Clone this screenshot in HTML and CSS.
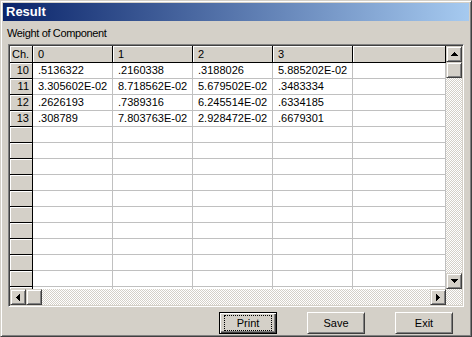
FILE: index.html
```html
<!DOCTYPE html>
<html lang="en">
<head>
    <meta charset="UTF-8">
    <title>Result</title>
    <link rel="stylesheet" href="styles.css">
</head>
<body>
    <div class="window">
        <div class="titlebar">Result</div>
        <div class="client">
            <div class="caption">Weight of Component</div>

            <!-- flex grid with its scrollbars -->
            <div class="gridframe">
                <div class="sheet">
                    <table class="grid">
                        <colgroup>
                            <col class="c-ch"><col class="c-data"><col class="c-data"><col class="c-data"><col class="c-data"><col class="c-last">
                        </colgroup>
                        <tr class="head">
                            <th>Ch.</th><th>0</th><th>1</th><th>2</th><th>3</th><th></th>
                        </tr>
                        <tr><th>10</th><td>.5136322</td><td>.2160338</td><td>.3188026</td><td>5.885202E-02</td><td></td></tr>
                        <tr><th>11</th><td>3.305602E-02</td><td>8.718562E-02</td><td>5.679502E-02</td><td>.3483334</td><td></td></tr>
                        <tr><th>12</th><td>.2626193</td><td>.7389316</td><td>6.245514E-02</td><td>.6334185</td><td></td></tr>
                        <tr><th>13</th><td>.308789</td><td>7.803763E-02</td><td>2.928472E-02</td><td>.6679301</td><td></td></tr>
                        <tr><th></th><td></td><td></td><td></td><td></td><td></td></tr>
                        <tr><th></th><td></td><td></td><td></td><td></td><td></td></tr>
                        <tr><th></th><td></td><td></td><td></td><td></td><td></td></tr>
                        <tr><th></th><td></td><td></td><td></td><td></td><td></td></tr>
                        <tr><th></th><td></td><td></td><td></td><td></td><td></td></tr>
                        <tr><th></th><td></td><td></td><td></td><td></td><td></td></tr>
                        <tr><th></th><td></td><td></td><td></td><td></td><td></td></tr>
                        <tr><th></th><td></td><td></td><td></td><td></td><td></td></tr>
                        <tr><th></th><td></td><td></td><td></td><td></td><td></td></tr>
                        <tr><th></th><td></td><td></td><td></td><td></td><td></td></tr>
                        <tr><th></th><td></td><td></td><td></td><td></td><td></td></tr>
                    </table>
                </div>

                <div class="vscroll">
                    <div class="sbtn"><svg width="7" height="4" viewBox="0 0 7 4"><path d="M3 0h1v1h1v1h1v1h1v1H0V3h1V2h1V1h1z"/></svg></div>
                    <div class="sbtn"></div>
                    <div class="track"></div>
                    <div class="sbtn"><svg width="7" height="4" viewBox="0 0 7 4"><path d="M0 0h7v1H6v1H5v1H4v1H3V3H2V2H1V1H0z"/></svg></div>
                </div>

                <div class="hscroll">
                    <div class="sbtn"><svg width="4" height="7" viewBox="0 0 4 7"><path d="M3 0h1v7H3V6H2V5H1V4H0V3h1V2h1V1h1z"/></svg></div>
                    <div class="sbtn"></div>
                    <div class="track"></div>
                    <div class="sbtn"><svg width="4" height="7" viewBox="0 0 4 7"><path d="M0 0h1v1h1v1h1v1h1v1H3v1H2v1H1v1H0z"/></svg></div>
                </div>

                <div class="corner"></div>
            </div>

            <div class="buttons">
                <button class="btn default"><span>Print</span></button>
                <button class="btn"><span>Save</span></button>
                <button class="btn"><span>Exit</span></button>
            </div>
        </div>
    </div>
</body>
</html>
```

FILE: styles.css
```css
body {
    margin: 0;
    font-family: "Liberation Sans", Arial, sans-serif;
    font-size: 11px;
    color: #000;
}
.window {
    width: 472px;
    height: 337px;
    box-sizing: border-box;
    background: #d4d0c8;
    border: 1px solid;
    border-color: #d4d0c8 #404040 #404040 #d4d0c8;
    box-shadow: inset 1px 1px #fff, inset -1px -1px #808080;
    padding: 2px;
    display: flex;
    flex-direction: column;
}
.titlebar {
    height: 18px;
    line-height: 18px;
    padding-left: 3px;
    background: linear-gradient(to right, #0a246a, #a6caf0);
    color: #fff;
    font-weight: bold;
    font-size: 13px;
}
.client {
    display: flex;
    flex-direction: column;
}
.caption {
    margin: 6px 0 4px 4px;
    line-height: 13px;
    letter-spacing: -0.35px;
}
.gridframe {
    margin-left: 5px;
    width: 456px;
    height: 263px;
    box-sizing: border-box;
    border: 1px solid;
    border-color: #808080 #fff #fff #808080;
    box-shadow: inset 1px 1px #404040, inset -1px -1px #d4d0c8;
    padding: 1px;
    display: grid;
    grid-template-columns: 436px 16px;
    grid-template-rows: 243px 16px;
}
.sheet {
    overflow: hidden;
    background: #fff;
}
.grid {
    table-layout: fixed;
    border-collapse: separate;
    border-spacing: 0;
    width: 436px;
}
.c-ch { width: 23px; }
.c-data { width: 80px; }
.c-last { width: 93px; }
.grid td, .grid th {
    height: 15px;
    padding: 0 0 0 5px;
    line-height: 15px;
    font-weight: normal;
    text-align: left;
    white-space: nowrap;
    overflow: hidden;
    border-right: 1px solid #c0c0c0;
    border-bottom: 1px solid #c0c0c0;
}
.grid th {
    background: #d4d0c8;
    border-color: #000;
    box-shadow: inset 1px 1px #fff;
}
.grid tr th:first-child {
    text-align: right;
    padding: 0 3px 0 0;
}
.grid .head th {
    height: 16px;
    line-height: 16px;
}
.grid .head th:first-child {
    text-align: left;
    padding: 0 0 0 2px;
}
.sbtn {
    width: 16px;
    height: 16px;
    box-sizing: border-box;
    flex: none;
    background: #d4d0c8;
    border: 1px solid;
    border-color: #d4d0c8 #404040 #404040 #d4d0c8;
    box-shadow: inset 1px 1px #fff, inset -1px -1px #808080;
    display: flex;
    align-items: center;
    justify-content: center;
}
.sbtn svg {
    display: block;
}
.track {
    flex: 1;
    background: repeating-conic-gradient(#d4d0c8 0 25%, #fff 0 50%) 0 0 / 2px 2px;
}
.vscroll {
    display: flex;
    flex-direction: column;
}
.hscroll {
    display: flex;
}
.corner {
    background: repeating-conic-gradient(#d4d0c8 0 25%, #fff 0 50%) 0 0 / 2px 2px;
}
.buttons {
    display: flex;
    justify-content: flex-end;
    gap: 30px;
    margin-top: 5px;
    padding-right: 16px;
}
.btn {
    width: 58px;
    height: 22px;
    padding: 0;
    box-sizing: border-box;
    font-family: inherit;
    font-size: 11px;
    color: #000;
    background: #d4d0c8;
    border: 1px solid;
    border-color: #fff #404040 #404040 #fff;
    box-shadow: inset 1px 1px #d4d0c8, inset -1px -1px #808080;
    display: flex;
    align-items: center;
    justify-content: center;
}
.btn.default {
    border-color: #000;
    box-shadow: inset 1px 1px #fff, inset -1px -1px #404040, inset -2px -2px #808080;
}
.btn.default span {
    display: block;
    width: 46px;
    height: 14px;
    line-height: 14px;
    outline: 1px dotted #000;
}
```
